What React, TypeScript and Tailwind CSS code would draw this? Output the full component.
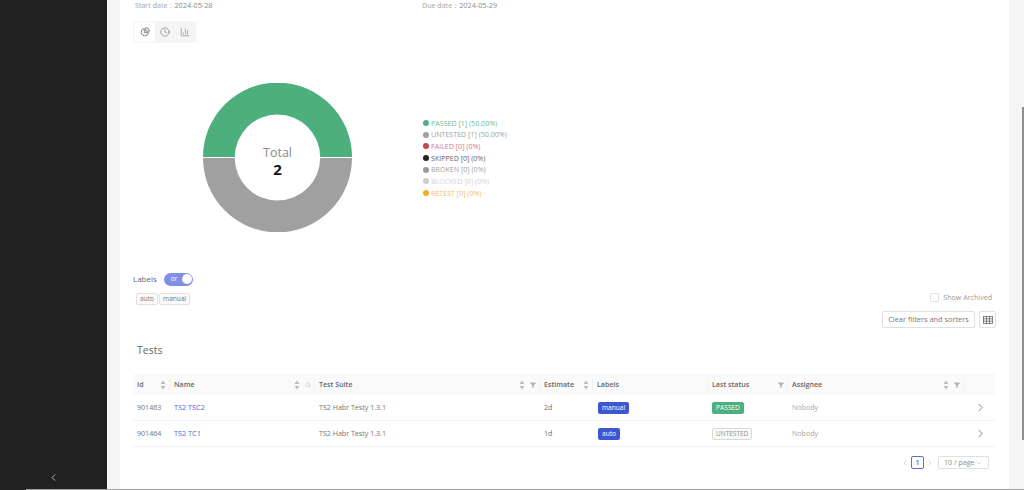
import { ChevronLeft, ChevronRight, ChevronDown, Search, Filter, Clock, BarChart3 } from "lucide-react";

const legend = [
  { dot: "bg-[#4caf7d]", text: "text-[#6fbb94]", label: "PASSED [1] (50.00%)" },
  { dot: "bg-[#a0a0a0]", text: "text-[#a3a3a3]", label: "UNTESTED [1] (50.00%)" },
  { dot: "bg-[#c9414f]", text: "text-[#cf7a84]", label: "FAILED [0] (0%)" },
  { dot: "bg-[#222222]", text: "text-[#666666]", label: "SKIPPED [0] (0%)" },
  { dot: "bg-[#999999]", text: "text-[#a3a3a3]", label: "BROKEN [0] (0%)" },
  { dot: "bg-[#cccccc]", text: "text-[#d4d4d4]", label: "BLOCKED [0] (0%)" },
  { dot: "bg-[#f0ad1e]", text: "text-[#efc06a]", label: "RETEST [0] (0%)" },
];

function Sorter() {
  return (
    <svg width="6" height="10" viewBox="0 0 6 10" className="fill-[#bdbdbd] shrink-0">
      <path d="M3 0.5 L5.5 4 H0.5 Z" />
      <path d="M3 9.5 L5.5 6 H0.5 Z" />
    </svg>
  );
}

function FilterIcon() {
  return <Filter size={6} className="shrink-0 fill-[#b0b0b0] text-[#b0b0b0]" />;
}

function HeadCell({ title, sort, extra, width }: { title?: string; sort?: boolean; extra?: React.ReactNode; width: string }) {
  return (
    <div className={`${width} h-[11px] flex items-center justify-between pl-1 pr-[3px] border-r border-[#f0f0f0]`}>
      <span className="font-semibold text-[#666666] text-[7.1px]">{title}</span>
      <span className="flex items-center gap-[5px]">
        {sort && <Sorter />}
        {extra}
      </span>
    </div>
  );
}

function Row({ id, name, est, label, status }: { id: string; name: string; est: string; label: string; status: string }) {
  return (
    <div className="flex items-center h-[26px] border-b border-[#f2f2f2] text-[#737373]">
      <div className="w-[37px] pl-1">{id}</div>
      <div className="w-[145px] pl-1 text-[#4f68e0] text-[7.3px]">{name}</div>
      <div className="w-[225px] pl-1">TS2 Habr Testy 1.3.1</div>
      <div className="w-[53px] pl-1">{est}</div>
      <div className="w-[115px] pl-[5px]">
        <span className="inline-block rounded-[2px] bg-[#3f55d1] text-white px-[4px] h-[12px] leading-[12px] text-[6.6px]">{label}</span>
      </div>
      <div className="w-[80px] pl-1">
        {status === "PASSED" ? (
          <span className="inline-block rounded-[2px] bg-[#4caf7d] text-white px-[4px] h-[12px] leading-[12px] text-[6.6px]">{status}</span>
        ) : (
          <span className="inline-block rounded-[2px] border border-[#d9d9d9] bg-[#fafafa] text-[#8c8c8c] px-[3px] h-[12px] leading-[10px] text-[6.5px]">{status}</span>
        )}
      </div>
      <div className="w-[176px] pl-1 text-[#a6a6a6]">Nobody</div>
      <div className="flex-1 flex justify-end pr-[9px]">
        <ChevronRight size={13} strokeWidth={1.6} className="text-[#707070]" />
      </div>
    </div>
  );
}

export default function App() {
  return (
    <div className="relative h-[490px] w-[1024px] flex overflow-hidden bg-[#f5f5f5] font-['Open_Sans',sans-serif] text-[7.1px]">
      {/* Sidebar */}
      <aside className="w-[107px] shrink-0 bg-[#212121] flex flex-col justify-end items-center pb-[7px]">
        <ChevronLeft size={11} className="text-[#c8c8c8]" />
      </aside>

      {/* Content */}
      <main className="flex-1 min-w-0 px-[13px]">
        <div className="h-[490px] bg-white px-[13px] flex flex-col">
          <div className="flex items-center h-[11px] text-[#a6a6a6] text-[7.1px]">
            <div className="w-[289px] pl-[2px]">
              Start date：<span className="text-[#8c8c8c] text-[7.3px]">2024-05-28</span>
            </div>
            <div>
              Due date：<span className="text-[#8c8c8c] text-[7.3px]">2024-05-29</span>
            </div>
          </div>

          {/* View switch */}
          <div className="mt-[10px] self-start flex h-[22px] w-[63px] p-[1px] rounded-[2px] bg-[#f5f5f5]">
            <div className="w-[21px] flex items-center justify-center bg-white rounded-[2px]">
              <svg width="10" height="10" viewBox="0 0 10 10" fill="none" stroke="#666" strokeWidth="0.8">
                <path d="M4.3 1.5 A3.7 3.7 0 1 0 8.5 5.7 H4.3 Z" />
                <path d="M5.8 0.6 A3.7 3.7 0 0 1 9.4 4.2 H5.8 Z" />
              </svg>
            </div>
            <div className="w-[20px] flex items-center justify-center">
              <Clock size={10} strokeWidth={1.4} className="text-[#666666]" />
            </div>
            <div className="w-[20px] flex items-center justify-center">
              <BarChart3 size={10} strokeWidth={1.4} className="text-[#777777]" />
            </div>
          </div>

          {/* Chart + legend */}
          <div className="mt-[40px] flex h-[149px]">
            <div className="ml-[70px] relative w-[149px] h-[149px] shrink-0">
              <svg width="149" height="149" viewBox="0 0 149 149">
                <path d="M0 74.1 A74.5 74.5 0 0 1 149 74.1 H117.2 A42.7 42.7 0 0 0 31.8 74.1 Z" fill="#4caf7d" />
                <path d="M0 74.9 A74.5 74.5 0 0 0 149 74.9 H117.2 A42.7 42.7 0 0 1 31.8 74.9 Z" fill="#a0a0a0" />
              </svg>
              <div className="absolute inset-0 flex flex-col items-center justify-center pt-[7px]">
                <span className="text-[12.5px] leading-[17px] text-[#8c8c8c]">Total</span>
                <span className="text-[15px] leading-[17px] font-bold text-[#111111]">2</span>
              </div>
            </div>
            <div className="ml-[71px] flex flex-col justify-center pt-[1px]">
              {legend.map((l) => (
                <div key={l.label} className={`flex items-center gap-[2px] h-[11.7px] whitespace-nowrap ${l.text}`}>
                  <span className={`w-[6px] h-[6px] rounded-full ${l.dot}`} />
                  {l.label}
                </div>
              ))}
            </div>
          </div>

          {/* Labels filter */}
          <div className="mt-[40px] flex items-center h-[14px]">
            <span className="text-[8px] text-[#666666]">Labels</span>
            <span className="ml-[7px] w-[29px] h-[13px] rounded-full bg-[#7f8fe6] flex items-center justify-between pl-[7px] pr-[1px] text-[6.5px] text-white">
              or
              <span className="w-[10px] h-[10px] rounded-full bg-white" />
            </span>
          </div>
          <div className="mt-[6px] flex justify-between items-start pl-[3px]">
            <div className="flex gap-[1px] mt-[1px]">
              <span className="h-[12px] px-[3px] leading-[10px] border border-[#e0e0e0] bg-[#fafafa] rounded-[2px] text-[#777777] text-[6.6px]">auto</span>
              <span className="h-[12px] px-[3px] leading-[10px] border border-[#e0e0e0] bg-[#fafafa] rounded-[2px] text-[#777777] text-[6.6px]">manual</span>
            </div>
            <div className="flex flex-col items-end">
              <div className="flex items-center gap-[4px] pr-[4px] h-[10px] text-[#9a9a9a]">
                <span className="w-[9px] h-[9px] rounded-[1px] border border-[#e0e0e0]" />
                Show Archived
              </div>
              <div className="mt-[9px] flex gap-[4px]">
                <span className="w-[93px] h-[17px] flex items-center justify-center border border-[#e0e0e0] rounded-[2px] text-[#777777] text-[7.4px] whitespace-nowrap">
                  Clear filters and sorters
                </span>
                <span className="w-[17px] h-[17px] flex items-center justify-center border border-[#e0e0e0] rounded-[2px]">
                  <svg width="10" height="8" viewBox="0 0 10 8" fill="none" stroke="#666" strokeWidth="0.8">
                    <rect x="0.5" y="0.5" width="9" height="7" />
                    <path d="M0.5 2.8 H9.5 M0.5 5.2 H9.5 M3.5 0.5 V7.5 M6.5 0.5 V7.5" />
                  </svg>
                </span>
              </div>
            </div>
          </div>

          <div className="mt-[15px] pl-[4px] text-[10.5px] leading-[14px] text-[#666666]">Tests</div>

          {/* Table */}
          <div className="mt-[17px]">
            <div className="flex items-center h-[21px] bg-[#fafafa]">
              <HeadCell title="Id" sort width="w-[37px]" />
              <HeadCell title="Name" sort extra={<Search size={6} className="text-[#bbbbbb]" />} width="w-[145px]" />
              <HeadCell title="Test Suite" sort extra={<FilterIcon />} width="w-[225px]" />
              <HeadCell title="Estimate" sort width="w-[53px]" />
              <HeadCell title="Labels" width="w-[115px]" />
              <HeadCell title="Last status" extra={<FilterIcon />} width="w-[80px]" />
              <HeadCell title="Assignee" sort extra={<FilterIcon />} width="w-[176px]" />
              <div className="flex-1" />
            </div>
            <Row id="901463" name="TS2 TSC2" est="2d" label="manual" status="PASSED" />
            <Row id="901464" name="TS2 TC1" est="1d" label="auto" status="UNTESTED" />
          </div>

          {/* Pagination */}
          <div className="mt-[9px] flex justify-end items-center pr-[7px] text-[#8c8c8c]">
            <ChevronLeft size={8} className="text-[#c4c4c4]" />
            <span className="mx-[2px] w-[13px] h-[13px] flex items-center justify-center border border-[#5a6fd0] rounded-[2px] text-[#5a6fd0] font-semibold">1</span>
            <ChevronRight size={8} className="text-[#c4c4c4]" />
            <span className="ml-[4px] w-[51px] h-[13px] flex items-center justify-between px-[5px] border border-[#e0e0e0] rounded-[2px] whitespace-nowrap">
              10 / page
              <ChevronDown size={8} className="text-[#c4c4c4]" />
            </span>
          </div>
        </div>
      </main>

      {/* Scrollbar */}
      <div className="w-[2px] shrink-0 flex flex-col pt-[107px]">
        <div className="h-[333px] bg-[#8f8f8f]" />
      </div>

      {/* Window edge line along the bottom */}
      <div className="absolute left-[26px] right-0 bottom-0 h-[1px] bg-[#a0a0a0]" />
    </div>
  );
}
